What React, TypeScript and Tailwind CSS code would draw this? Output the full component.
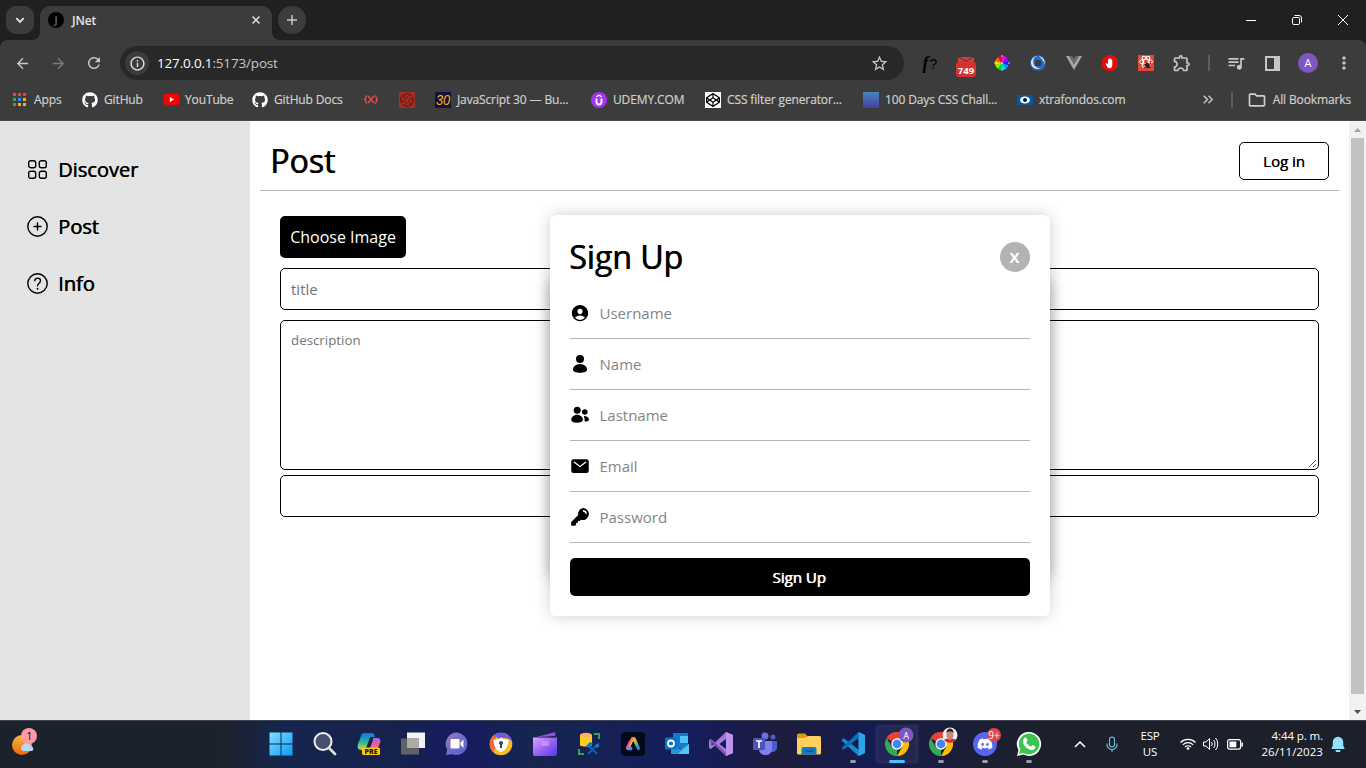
import type { ReactNode } from "react";
import { FaGithub, FaYoutube, FaCodepen, FaDiscord } from "react-icons/fa";
import {
  MdArrowBack,
  MdArrowForward,
  MdRefresh,
  MdStarOutline,
  MdOutlineInfo,
  MdQueueMusic,
  MdMoreVert,
  MdOutlineExtension,
  MdOutlineFolder,
} from "react-icons/md";
import { IoMail, IoPersonCircle } from "react-icons/io5";

function TabStrip() {
  return (
    <div className="flex h-10 shrink-0 items-start bg-[#1f2121]">
      <div className="mt-1.5 ml-1.5 flex size-7 items-center justify-center rounded-[10px] bg-[#3c3c3c]">
        <svg width="10" height="7" viewBox="0 0 10 7" fill="none" stroke="#e3e3e3" strokeWidth="1.8">
          <path d="M1.3 1.2 5 4.9 8.7 1.2" />
        </svg>
      </div>
      <div className="relative mt-1.5 ml-1.5 flex h-[34px] w-[232px] items-start rounded-t-[10px] bg-[#3c3c3c]">
        <svg className="absolute bottom-0 -left-2" width="8" height="8"><path d="M8 0v8H0a8 8 0 0 0 8-8" fill="#3c3c3c" /></svg>
        <svg className="absolute -right-2 bottom-0" width="8" height="8"><path d="M0 0v8h8a8 8 0 0 1-8-8" fill="#3c3c3c" /></svg>
        <div className="mt-1.5 ml-2 flex size-4 items-center justify-center rounded-full bg-black text-[11px] font-bold text-[#555]">J</div>
        <div className="mt-[7px] ml-2 grow text-[12px] leading-4 font-semibold tracking-[-0.1px] text-[#e8e8e8]">JNet</div>
        <svg className="mt-2.5 mr-3" width="8" height="8" viewBox="0 0 8 8" stroke="#e3e3e3" strokeWidth="1.5"><path d="m.5.5 7 7m0-7-7 7" /></svg>
      </div>
      <div className="mt-1.5 ml-1.5 flex size-7 items-center justify-center rounded-full bg-[#3c3c3c]">
        <svg width="10" height="10" viewBox="0 0 10 10" stroke="#c7c7c7" strokeWidth="1.5"><path d="M5 0v10M0 5h10" /></svg>
      </div>
      <div className="grow" />
      <div className="flex h-10 items-center text-white">
        <div className="flex w-[46px] justify-center"><svg width="10" height="10" stroke="currentColor"><path d="M0 5.5h10" /></svg></div>
        <div className="flex w-[46px] justify-center">
          <svg width="10" height="10" viewBox="0 0 10 10" fill="none" stroke="currentColor"><rect x=".5" y="2.5" width="7" height="7" rx="1.3" /><path d="M2.5.5H7A2.5 2.5 0 0 1 9.5 3v4.5" /></svg>
        </div>
        <div className="flex w-[46px] justify-center"><svg width="10" height="10" viewBox="0 0 10 10" stroke="currentColor"><path d="m0 0 10 10M10 0 0 10" /></svg></div>
      </div>
    </div>
  );
}

function Cell({ children }: { children: ReactNode }) {
  return <div className="flex w-9 shrink-0 items-center justify-center">{children}</div>;
}

const wheelColors = ["#f0f", "#a0f", "#22f", "#09f", "#0dd", "#0d4", "#7f0", "#fd0", "#f60", "#f03"];

function Toolbar() {
  return (
    <div className="flex h-[46px] shrink-0 items-center rounded-t-lg bg-[#3c3c3c] px-1 text-[#c7c7c7]">
      <Cell><MdArrowBack size={17} /></Cell>
      <Cell><MdArrowForward size={17} className="text-[#7b7b7b]" /></Cell>
      <Cell><MdRefresh size={18} /></Cell>
      <div className="ml-2 flex h-[34px] w-[784px] items-center rounded-full bg-[#282828]">
        <div className="ml-[5px] flex size-6 items-center justify-center rounded-full bg-[#3c3c3c]"><MdOutlineInfo size={17} className="text-[#e3e3e3]" /></div>
        <div className="ml-2 grow text-[13.500px] leading-5 tracking-[-0.17px] text-[#c7c7c7]"><span className="text-white">127.0.0.1</span>:5173/post</div>
        <MdStarOutline size={19} className="mr-[15px]" />
      </div>
      <div className="w-2" />
      <Cell>
        <span className="flex items-baseline gap-px leading-5 text-black">
          <span className="font-['Liberation_Serif',serif] text-[18px] font-bold italic">f</span>
          <span className="font-['Liberation_Sans',sans-serif] text-[14px]">?</span>
        </span>
      </Cell>
      <Cell>
        <svg className="mt-[7px]" width="20" height="21" viewBox="0 0 20 21"><path d="M2 1h16v5H2z" fill="#d93b30" /><path d="m2 .5 8 5 8-5" fill="none" stroke="#3c3c3c" /><rect y="6" width="20" height="15" rx="3" fill="#d7312f" /><text x="10" y="17.500" fill="#fff" fontSize="9.500" fontWeight="700" textAnchor="middle">749</text></svg>
      </Cell>
      <Cell>
        <svg width="16" height="16" viewBox="0 0 16 16">{wheelColors.map((c, i) => <path key={c} d="M8 8V1a7 7 0 0 1 4.110 1.340z" fill={c} transform={`rotate(${i * 36} 8 8)`} />)}<path d="M8 0v2M8 14v2M0 8h2M14 8h2" stroke="#ccc" /><circle cx="8" cy="8" r="1" fill="#ddd" /></svg>
      </Cell>
      <Cell>
        <svg width="16" height="16" viewBox="0 0 16 16"><circle cx="8" cy="8" r="7.8" fill="#286bbd" /><path d="M1 8.500a7 7 0 0 1 7-7.700A6 6 0 0 0 3.200 7c0 4 3.500 6 7 6.200-4 2-8.500-.500-9.200-4.700M9 1.200c4 .6 6.300 4 5.700 8-1-3-2.500-5.400-5.700-8" fill="#d6e6fa" /><circle cx="8" cy="8" r="3.300" fill="#3c3c3c" /></svg>
      </Cell>
      <Cell><svg width="16" height="14" viewBox="0 0 16 14"><path d="M0 0h3.2L8 8.2 12.8 0H16L8 14z" fill="#a8a8a8" /><path d="M3.2 0h3L8 3l1.8-3h3L8 8.2z" fill="#6b6b6b" /></svg></Cell>
      <Cell>
        <svg width="16" height="16" viewBox="0 0 16 16"><path d="M4.700 0h6.600L16 4.700v6.600L11.300 16H4.700L0 11.300V4.700z" fill="#e40d0d" /><path d="M4.600 8.300 6 9V4.600c0-.8 1-.8 1 0v-1c0-.8 1.1-.8 1.1 0v.5c0-.8 1.1-.8 1.1 0v1c0-.8 1.1-.8 1.1 0V10c0 2-1 3.200-2.700 3.200-1.500 0-2-.7-2.600-1.700L3.800 9c-.2-.6.3-1 .8-.7" fill="#fff" /></svg>
      </Cell>
      <Cell>
        <svg width="16" height="16" viewBox="0 0 16 16"><path d="M0 0h16v16H0z" fill="#df4a35" /><g fill="none" stroke="#fff"><ellipse cx="8" cy="6.700" rx="6.500" ry="2.500" /><ellipse cx="8" cy="6.700" rx="6" ry="2.500" transform="rotate(60 8 6.700)" /><ellipse cx="8" cy="6.700" rx="6" ry="2.500" transform="rotate(120 8 6.700)" /></g><ellipse cx="9.500" cy="10.500" rx="2.200" ry="2.800" fill="#32201e" transform="rotate(-25 9.500 10.500)" /><path d="m6 9 7 4m-7 0 7-5" stroke="#32201e" /></svg>
      </Cell>
      <Cell><MdOutlineExtension size={20} /></Cell>
      <div className="flex w-[18px] justify-center"><span className="h-4 w-0.5 bg-[#5e5e5e]" /></div>
      <Cell><MdQueueMusic size={20} /></Cell>
      <Cell><svg width="15" height="15" viewBox="0 0 15 15"><path d="M1 1h13v13H1z" fill="none" stroke="currentColor" strokeWidth="2" /><path d="M9 1h5v13H9z" fill="currentColor" /></svg></Cell>
      <Cell><span className="flex size-5 items-center justify-center rounded-full bg-[#7e57c2] text-[11px] text-white">A</span></Cell>
      <Cell><MdMoreVert size={20} /></Cell>
    </div>
  );
}

const appColors = ["#f44336", "#f44336", "#f44336", "#34a853", "#2196f3", "#fbae17", "#34a853", "#fbae17", "#fbae17"];

function Bookmark({ icon, label, width }: { icon: ReactNode; label?: string; width: string }) {
  return (
    <div className={`flex shrink-0 items-center gap-1.5 ${width}`}>
      <span className="flex size-4 shrink-0 items-center justify-center">{icon}</span>
      {label && <span className="whitespace-nowrap">{label}</span>}
    </div>
  );
}

function Bookmarks() {
  return (
    <div className="flex h-[35px] shrink-0 items-center border-b border-[#4a4848] bg-[#3c3c3c] pb-[7px] pl-3 text-[12px] leading-4 tracking-[-0.13px] text-[#cfcfcf] [-webkit-text-stroke:0.2px_currentColor]">
      <Bookmark width="w-[70px]" label="Apps" icon={
        <svg className="mr-0.5" width="13" height="13">{appColors.map((c, i) => <rect key={i} x={(i % 3) * 5} y={Math.floor(i / 3) * 5} width="3" height="3" fill={c} />)}</svg>
      } />
      <Bookmark width="w-[81px]" label="GitHub" icon={<FaGithub size={16} className="text-white" />} />
      <Bookmark width="w-[89px]" label="YouTube" icon={<FaYoutube size={17} className="shrink-0 rounded bg-[linear-gradient(#fff,#fff)] bg-[length:6px_6px] bg-center bg-no-repeat text-[#f00]" />} />
      <Bookmark width="w-[111px]" label="GitHub Docs" icon={<FaGithub size={16} className="text-white" />} />
      <Bookmark width="w-9" icon={<svg width="14" height="9" viewBox="0 0 14 9" fill="none" stroke="#ee4d50" strokeWidth="1.3"><path d="M3 .7C1 1 2.500 4 .7 4.500 2.500 5 1 8 3 8.300M11 .7c2 .3.500 3.300 2.300 3.800C11.500 5 13 8 11 8.300M4 1l6 7M10 1 4 8" /></svg>} />
      <Bookmark width="w-9" icon={
        <svg width="16" height="16" viewBox="0 0 16 16"><path d="M0 0h16v16H0z" fill="#aa2c24" /><g fill="none" stroke="#571f1b" strokeWidth="1">{[0, 60, 120, 180, 240, 300].map((a) => <path key={a} d="M8 6.500C8 3 11 1.500 13.500 4.500c1 1.500 1 3 .5 4" transform={`rotate(${a} 8 8)`} />)}</g></svg>
      } />
      <Bookmark width="w-[156px]" label="JavaScript 30 — Bu..." icon={
        <svg width="16" height="16"><path d="M0 0h16v16H0z" fill="#14123c" /><text x="8" y="13" fill="#f3b70f" fontSize="14" fontStyle="italic" fontFamily="Liberation Sans" textAnchor="middle" textLength="14" lengthAdjust="spacingAndGlyphs">30</text></svg>
      } />
      <Bookmark width="w-[114px]" label="UDEMY.COM" icon={
        <svg width="16" height="16" fill="none" stroke="#fff"><circle cx="8" cy="8" r="8" fill="#a435f0" stroke="none" /><path d="M5.500 6.500V10a2.500 2.500 0 0 0 5 0V6.500" strokeWidth="1.900" /><path d="M5.300 4.800 8 3.200l2.700 1.600" strokeWidth="1.300" /></svg>
      } />
      <Bookmark width="w-[158px]" label="CSS filter generator..." icon={<span className="flex size-4 items-center justify-center bg-white text-black"><FaCodepen size={14} /></span>} />
      <Bookmark width="w-[154px]" label="100 Days CSS Chall..." icon={<span className="size-4 bg-linear-to-b from-[#4584ba] to-[#473c9f]" />} />
      <Bookmark width="w-[114px]" label="xtrafondos.com" icon={
        <svg width="16" height="16"><path d="M0 3h16v10H0z" fill="#08569b" /><ellipse cx="8" cy="8" rx="5" ry="3.500" fill="#fff" /><circle cx="8" cy="8" r="2" fill="#111" /></svg>
      } />
      <div className="grow" />
      <svg className="mr-[18px]" width="10" height="9" fill="none" stroke="#c7c7c7" strokeWidth="1.500"><path d="m.7.7 3.800 3.800L.7 8.300M5.500.7l3.800 3.800-3.800 3.800" /></svg>
      <span className="mr-4 h-4 w-0.5 bg-[#5e5e5e]" />
      <MdOutlineFolder size={20} className="mr-1.5 -ml-0.5" />
      <span className="mr-[15px] whitespace-nowrap">All Bookmarks</span>
    </div>
  );
}

const iconProps = { width: 20, height: 20, viewBox: "0 0 20 20", fill: "currentColor" };

function PersonIcon() {
  return <svg {...iconProps}><circle cx="10" cy="4.900" r="4" /><path d="M10 10c4.200 0 7 2.900 7 5.500 0 2.200-2.800 3.200-7 3.200s-7-1-7-3.200C3 12.900 5.800 10 10 10" /></svg>;
}

function PeopleIcon() {
  return (
    <svg {...iconProps}>
      <circle cx="7.200" cy="5.300" r="3.500" />
      <circle cx="14.800" cy="7" r="2.800" />
      <path d="M7.200 9.800c3.200 0 5.700 2.500 5.700 5 0 2-2.500 2.900-5.900 2.900-3.500 0-5.800-.900-5.800-2.900 0-2.500 2.600-5 6-5M13.800 11c3 0 5.200 1.700 5.200 3.600 0 1.500-1.700 2.100-4.400 2 .3-2.200-.3-4.100-.8-5.600" />
    </svg>
  );
}

function KeyIcon() {
  return <svg {...iconProps}><path fillRule="evenodd" d="M13 1a6 6 0 1 1-2 11.700L9.500 14H8v1.800H6.200v1.800L5 18.800H1.200V15l7-7A6 6 0 0 1 13 1m-.2 2.600c-.3.700.2 1.200.900 1.300 1.100.2 1.600.8 1.800 1.700.2.700 1 .8 1.200.1.400-2-1.800-4.200-3.900-3.100" /></svg>;
}

function SignUp() {
  const fields = [
    { label: "Username", icon: <IoPersonCircle size={20} /> },
    { label: "Name", icon: <PersonIcon /> },
    { label: "Lastname", icon: <PeopleIcon /> },
    { label: "Email", icon: <IoMail size={20} /> },
    { label: "Password", icon: <KeyIcon /> },
  ];
  return (
    <div className="absolute top-[94px] left-[550px] flex h-[401px] w-[500px] flex-col rounded-md bg-white px-5 pb-5 shadow-[0_0_15px_rgba(0,0,0,0.2)]">
      <div className="flex items-center justify-between pt-5">
        <h2 className="-ml-px text-[32px] leading-[44px] [text-shadow:0.7px_0_currentColor]">Sign Up</h2>
        <button className="flex size-[30px] items-center justify-center rounded-full bg-[#b3b3b3] pr-px text-[15px] leading-5 font-bold text-white">X</button>
      </div>
      <div className="mt-[9px] flex flex-col">
        {fields.map((f) => (
          <label key={f.label} className="flex h-[51px] items-center gap-[9.500px] border-b border-[#b3b3b3]">
            {f.icon}
            <span className="text-[15px] text-[#858585]">{f.label}</span>
          </label>
        ))}
      </div>
      <button className="mt-auto h-[38px] rounded-[5px] bg-black pr-0.5 text-[15px] text-white [text-shadow:0.8px_0_currentColor]">Sign Up</button>
    </div>
  );
}

const navIconProps = { width: 21, height: 21, viewBox: "0 0 21 21", fill: "none", stroke: "currentColor", strokeWidth: 1.4, strokeLinecap: "round" as const };

function Page() {
  const nav = [
    {
      label: "Discover",
      icon: <svg {...navIconProps}><rect x="1.700" y="1.700" width="7" height="7" rx="2" /><rect x="12.300" y="1.700" width="7" height="7" rx="2" /><rect x="1.700" y="12.300" width="7" height="7" rx="2" /><rect x="12.300" y="12.300" width="7" height="7" rx="2" /></svg>,
    },
    {
      label: "Post",
      icon: <svg {...navIconProps}><circle cx="10.500" cy="10.500" r="9.700" /><path d="M10.500 7v7M7 10.500h7" /></svg>,
    },
    {
      label: "Info",
      icon: <svg {...navIconProps}><circle cx="10.500" cy="10.500" r="9.700" /><path d="M7.800 7.800c0-3.600 5.700-3.500 5.700 0 0 2.400-2.900 2.400-2.900 4.900" /><path d="M10.600 15.700v.1" strokeWidth="1.800" /></svg>,
    },
  ];
  return (
    <div className="relative flex h-[599px] shrink-0 bg-white text-black">
      <nav className="flex w-[250px] flex-col bg-[#e4e4e4] pt-5 pl-[25px]">
        {nav.map((n) => (
          <div key={n.label} className="flex h-[57px] items-center gap-2">
            <span className="flex w-[25px] justify-center">{n.icon}</span>
            <span className="text-[20px] [text-shadow:0.6px_0_currentColor]">{n.label}</span>
          </div>
        ))}
      </nav>
      <main className="flex grow flex-col px-2.5">
        <header className="flex h-[70px] items-center justify-between border-b border-[#b3b3b3] pt-3 pr-2.5 pb-px pl-2.5">
          <h1 className="text-[32px] leading-[44px] [text-shadow:0.7px_0_currentColor]">Post</h1>
          <button className="h-[38px] w-[90px] rounded-[5px] border border-black text-[15px] [text-shadow:0.3px_0_currentColor]">Log in</button>
        </header>
        <form className="flex flex-col items-start px-5 pt-[25px]">
          <div className="flex h-[42px] w-[126px] items-center justify-center rounded-[5px] bg-black text-[16px] text-white">Choose Image</div>
          <div className="mt-2.5 flex h-[42px] w-full items-center rounded-[5px] border border-black px-2.5 text-[15px] text-[#757575]">title</div>
          <div className="mt-2.5 flex h-[150px] w-full items-end justify-between rounded-[5px] border border-black">
            <span className="self-start pt-2.5 pl-2.5 text-[13.33px] leading-[19px] text-[#757575]">description</span>
            <svg width="11" height="11" stroke="#555"><path d="m2 9 7-7M6 9l3-3" /></svg>
          </div>
          <div className="mt-[5px] h-[42px] w-full rounded-[5px] border border-black" />
        </form>
      </main>
      <div className="flex w-[17px] flex-col items-center justify-between bg-[#f1f1f1]">
        <svg width="17" height="17"><path d="M5 11h7L8.500 7z" fill="#a3a3a3" /></svg>
        <div className="h-[556px] w-[13px] bg-[#c1c1c1]" />
        <div className="grow" />
        <svg width="17" height="17"><path d="M5 7h7l-3.500 4z" fill="#505050" /></svg>
      </div>
      <div className="absolute top-[158px] left-[550px] h-[299px] w-[500px] rounded-md bg-white shadow-[0_0_15px_rgba(0,0,0,0.3)]" />
      <SignUp />
    </div>
  );
}

function Chrome() {
  return (
    <>
      <path d="M12 12 1.600 6A12 12 0 0 1 22.400 6z" fill="#ea4335" />
      <path d="M12 12v12A12 12 0 0 1 1.600 6l5.200 9z" fill="#34a853" />
      <path d="M12 6h10.400A12 12 0 0 1 12 24l5.200-9z" fill="#fbbc05" />
      <path d="M12 6h10.400A12 12 0 0 0 1.600 6l5.200 3z" fill="#ea4335" />
      <circle cx="12" cy="12" r="5.700" fill="#fff" />
      <circle cx="12" cy="12" r="4.400" fill="#4285f4" />
    </>
  );
}

function Svg({ children }: { children: ReactNode }) {
  return <svg width="24" height="24" viewBox="0 0 24 24" className="overflow-visible">{children}</svg>;
}

function TaskIcon({ children, mark }: { children: ReactNode; mark?: "open" | "active" }) {
  return (
    <div className={`relative flex h-10 w-11 shrink-0 items-center justify-center ${mark === "active" ? "rounded bg-white/5 outline outline-white/5 -outline-offset-3" : ""}`}>
      {children}
      {mark && <span className={`absolute bottom-px h-[3px] rounded-full ${mark === "active" ? "w-4 bg-[#4cc2ff]" : "w-1.5 bg-[#9a9da3]"}`} />}
    </div>
  );
}

function Taskbar() {
  return (
    <div className="flex h-12 shrink-0 items-center border-t border-[#3d4250] bg-[linear-gradient(90deg,#1c222b_0,#1c222b_220px,#15254c_280px,#15224f_400px,#151b60_460px,#16254f_535px,#141d5c_690px,#1d1c3d_780px,#141b50_870px,#1c1f33_980px,#1b202b_1050px)] pb-px text-white">
      <div className="flex w-[259px] pl-[11px]">
        <svg className="-mt-1" width="28" height="28" viewBox="0 0 28 28">
          <defs><linearGradient id="sun" x2="0" y2="1"><stop stopColor="#f8b63b" /><stop offset="1" stopColor="#ee6a10" /></linearGradient></defs>
          <circle cx="11" cy="17" r="10" fill="url(#sun)" />
          <path d="M12 23a3.500 3.500 0 0 1-.5-6 5 5 0 0 1 8.500 1 2.700 2.700 0 0 1 1 5z" fill="#b9d5f8" />
          <circle cx="18" cy="8" r="8" fill="#ff99a4" /><text x="18.500" y="12" fontSize="11" textAnchor="middle" fill="#111">1</text>
        </svg>
      </div>
      <TaskIcon><Svg><defs><linearGradient id="win" x2="1" y2="1"><stop stopColor="#7fe0ff" /><stop offset="1" stopColor="#0b9bf5" /></linearGradient></defs><path d="M.5.5h11v11H.5zm12 0h11v11h-11zm-12 12h11v11H.5zm12 0h11v11h-11z" fill="url(#win)" /></Svg></TaskIcon>
      <TaskIcon><Svg><circle cx="10" cy="9.500" r="8.500" fill="#44516d" stroke="#f0f0f0" strokeWidth="2" /><path d="m16 16 6 6" stroke="#dedede" strokeWidth="2.800" strokeLinecap="round" /></Svg></TaskIcon>
      <TaskIcon><Svg>
        <defs><linearGradient id="cpa" x2="0" y2="1"><stop stopColor="#1a74d9" /><stop offset=".5" stopColor="#23b2a5" /><stop offset="1" stopColor="#cbd83c" /></linearGradient><linearGradient id="cpb" x2="0" y2="1"><stop stopColor="#b45be8" /><stop offset="1" stopColor="#f36c6c" /></linearGradient></defs>
        <path d="M7 1h8c2 0 2 2 3 4h-5l-3.500 10c-1 2-2 3-5 3C1 18 0 15 1 12L4 4c.700-2 1.500-3 3-3" fill="url(#cpa)" />
        <path d="M16 6h4c3 0 4 2 3 5l-2 5h-8l3-8z" fill="url(#cpb)" />
        <rect x="5" y="15.500" width="18" height="7.500" rx="1.500" fill="#fdc50b" /><text x="14" y="22" fontSize="7" fontWeight="800" textAnchor="middle" fill="#1b1b1b">PRE</text>
      </Svg></TaskIcon>
      <TaskIcon><Svg><path d="M6 .5h18V16H6z" fill="#f2f2f2" /><path d="M0 6.500h18v16H0z" fill="#626262" /><path d="M6 6.500h12V16H6z" fill="#aaa" /></Svg></TaskIcon>
      <TaskIcon><Svg><defs><linearGradient id="chat" x2="1" y2="1"><stop stopColor="#9479b0" /><stop offset="1" stopColor="#5060dc" /></linearGradient></defs><path d="M12 .5A11.300 11.300 0 1 1 7 22.300L1 23l1.200-5.500A11.300 11.300 0 0 1 12 .5" fill="url(#chat)" /><rect x="5.500" y="7" width="9" height="9.500" rx="1" fill="#fff" /><path d="m15.500 10.500 3-3v8.500l-3-3z" fill="#fff" /></Svg></TaskIcon>
      <TaskIcon><Svg>
        <circle cx="12" cy="12" r="11.300" fill="#f8bd27" /><path d="M4 20A11.300 11.300 0 0 1 8 1.500c2-1-4 6 0 12z" fill="#f4683d" /><path d="M5 3a11.300 11.300 0 0 1 18 7c-3-4-8-5-13-3z" fill="#7057e8" /><path d="M4.500 7.500C8 8 10 7 12 5.500 14 7 16 8 19.500 7.500c0 7-3 11-7.500 12.500-4.500-1.500-7.500-5.500-7.500-12.500" fill="#fff" /><circle cx="12" cy="11" r="2" fill="#39465b" /><path d="M11 11h2v5h-2z" fill="#39465b" />
      </Svg></TaskIcon>
      <TaskIcon><Svg><defs><linearGradient id="clip" x2="1" y2="1"><stop stopColor="#e0a2ff" /><stop offset=".5" stopColor="#9c63f4" /><stop offset="1" stopColor="#5237ed" /></linearGradient></defs><path d="M0 6 21 .3a1 1 0 0 1 1.300 1V4L1 9z" fill="#8b55c9" /><path d="M0 5.500h24V22a2 2 0 0 1-2 2H2a2 2 0 0 1-2-2z" fill="url(#clip)" /><path d="M0 5.500 22 4v1.500z" fill="#16245a" /><path d="M8 9h8v5H8z" fill="#d69dff" opacity=".6" /></Svg></TaskIcon>
      <TaskIcon><Svg>
        <path d="M3 3v10c0 2 12 2 12 0V3z" fill="#ffcb25" /><ellipse cx="9" cy="3" rx="6" ry="2.200" fill="#ffad72" /><path d="M17 2h5v5M2 17v5h5" fill="none" stroke="#37a04b" strokeWidth="2" /><path d="m11 13 9 9M20 13l-9 9" stroke="#0e5fb0" strokeWidth="2" /><path d="m9 14 4-4 3 1-4 5zM18 13l4-2v4l-3 1z" fill="#1675c5" />
      </Svg></TaskIcon>
      <TaskIcon><Svg><defs><linearGradient id="adb" x2="1" y2="1"><stop stopColor="#ff433d" /><stop offset=".4" stopColor="#ffb32f" /><stop offset=".65" stopColor="#45d44f" /><stop offset="1" stopColor="#5a62f7" /></linearGradient></defs><rect width="24" height="24" rx="4" fill="#020a19" /><path d="M7 16.500 11.500 6.500h1.500l4.500 10" fill="none" stroke="url(#adb)" strokeWidth="3.200" strokeLinecap="round" strokeLinejoin="round" /><circle cx="9.500" cy="16.500" r="2" fill="#4e83ff" /><path d="m5.500 17 3.500-8" stroke="#ee4cc5" strokeWidth="2" /></Svg></TaskIcon>
      <TaskIcon><Svg><path d="M8 1h14a1 1 0 0 1 1 1v14H8z" fill="#1678ca" /><path d="M15 4h8v7h-8z" fill="#4bc6fa" /><path d="m6 12 9 5 9-5v10H6z" fill="#2295db" /><path d="m24 12-11 10h11z" fill="#54c5ef" /><rect y="5.500" width="12" height="12" rx="1" fill="#0976c7" /><circle cx="6" cy="11.500" r="3" fill="none" stroke="#fff" strokeWidth="1.800" /></Svg></TaskIcon>
      <TaskIcon><Svg><path d="m17 0 7 3v18l-7 3L6 13.500 2 17l-2-1V8l2-1 4 3.500zm0 7-6.500 5 6.500 5zM2.500 10v4l2-2z" fill="#a278da" fillRule="evenodd" /><path d="m0 8 2-1 16 15-1 2z" fill="#7850ae" /><path d="m17 0 7 3v18l-7 3z" fill="#c092ef" /></Svg></TaskIcon>
      <TaskIcon><Svg><circle cx="12" cy="4" r="3.500" fill="#6b71d7" /><circle cx="20" cy="5" r="2.500" fill="#5059c9" /><path d="M15 9h9v6c0 6-6 6-9 3z" fill="#5059c9" /><path d="M6 9h13v8c0 8-13 8-13 0z" fill="#7b83eb" /><rect y="6" width="12" height="12" rx="1" fill="#4b53bc" /><path d="M3 9h6M6 9v7" stroke="#fff" strokeWidth="1.700" /></Svg></TaskIcon>
      <TaskIcon><Svg><path d="M0 3a1.500 1.500 0 0 1 1.500-1.500H8l3 3-3 3H0z" fill="#dd9910" /><path d="M0 6h8l3-2h11.500A1.500 1.500 0 0 1 24 5.500V21a1.500 1.500 0 0 1-1.500 1.500h-21A1.500 1.500 0 0 1 0 21z" fill="#ffd15c" /><path d="M4.500 22.500V17a2 2 0 0 1 2-2h11a2 2 0 0 1 2 2v5.500z" fill="#127bc5" /><path d="M8 18.500h8v1.500H8z" fill="#0b5796" /></Svg></TaskIcon>
      <TaskIcon mark="open"><Svg><path d="M17.500 0 24 3v18l-6.500 3-17-15.500L2.500 6 18 18z" fill="#178ace" /><path d="M17.500 0v6L2.500 18 .500 16z" fill="#0b70b5" /><path d="m17.500 0 6.500 3v18l-6.500 3z" fill="#2da4ea" /></Svg></TaskIcon>
      <TaskIcon mark="active"><Svg><Chrome /><circle cx="21" cy="3" r="7.500" fill="#7e57c2" /><text x="21" y="6.500" fontSize="9" textAnchor="middle" fill="#fff">A</text></Svg></TaskIcon>
      <TaskIcon mark="open"><Svg><Chrome /><circle cx="21" cy="3" r="7.500" fill="#eef0ef" /><path d="M15 8c2-2 10-2 12 0-3 3.500-9 3.500-12 0" fill="#cf263b" /><ellipse cx="21" cy="3" rx="3.500" ry="5" fill="#c98d75" /><path d="M17.300 1c0-6 7.400-6 7.400 0-2-2-5.400-2-7.400 0" fill="#352724" /></Svg></TaskIcon>
      <TaskIcon mark="open"><Svg><circle cx="12" cy="12" r="12" fill="#5865f2" /><FaDiscord x={4} y={4} size={16} color="#fff" /><circle cx="21" cy="3" r="7" fill="#df474c" /><text x="21" y="7" fontSize="10" textAnchor="middle" fill="#fff">9+</text></Svg></TaskIcon>
      <TaskIcon mark="open"><Svg><path d="M12 0a12 12 0 1 1-5.500 22.600L0 24l1.500-6A12 12 0 0 1 12 0" fill="#fff" /><path d="M12 1.600A10.400 10.400 0 1 1 6.800 21L2 22l1.200-4.700A10.400 10.400 0 0 1 12 1.600" fill="#3dc455" /><path d="M7.500 6c.7-.7 1.700-.5 2 .2l1 2.400-1.200 1.700c1 2 2.500 3.500 4.600 4.400l1.600-1.700 3 1.500c.4 3-3 4-5 3.300C9.500 16.500 6.500 13.500 6 10c-.2-1.700.5-3 1.500-4" fill="#fff" /></Svg></TaskIcon>
      <div className="grow" />
      <div className="flex w-8 justify-center"><svg width="12" height="7" fill="none" stroke="#fff" strokeWidth="1.500"><path d="m1 6 5-5 5 5" /></svg></div>
      <div className="flex w-8 justify-center"><svg width="12" height="17" fill="none" stroke="#6fc6dc" strokeWidth="1.100"><rect x="3.500" y="1" width="5" height="10" rx="2.500" /><path d="M1 7.500v1a5 5 0 0 0 10 0v-1M6 13.500V16" /></svg></div>
      <div className="flex w-11 flex-col text-center text-[11.500px] leading-4 tracking-[-0.200px]"><span>ESP</span><span>US</span></div>
      <div className="flex w-[76px] items-center justify-around pl-1">
        <svg width="16" height="12" viewBox="0 0 16 12" fill="none" stroke="#fff" strokeWidth="1.200"><path d="M.500 4.500a10.500 10.500 0 0 1 15 0M2.800 6.800a7.300 7.300 0 0 1 10.400 0M5 9a4.300 4.300 0 0 1 6 0" /><circle cx="8" cy="10.500" r="1.300" fill="#fff" stroke="none" /></svg>
        <svg width="16" height="14" viewBox="0 0 16 14" fill="none" stroke="#fff"><path d="M.5 5h2.700L6.500 1.500v11L3.200 9H.5zM8.500 5a3 3 0 0 1 0 4m2-6a6 6 0 0 1 0 8m2-10a9 9 0 0 1 0 12" /></svg>
        <svg width="17" height="11" viewBox="0 0 17 11"><rect x=".6" y=".6" width="13" height="9.500" rx="2" fill="none" stroke="#fff" strokeWidth="1.200" /><path d="M2.500 2.500h6.800v5.700H2.500zM14.500 3.500h1.500v4h-1.500z" fill="#fff" /></svg>
      </div>
      <div className="ml-1 flex w-[71px] flex-col text-right text-[11.500px] leading-4 tracking-[0.050px] whitespace-nowrap"><span className="tracking-[-0.100px]">4:44 p. m.</span><span>26/11/2023</span></div>
      <svg className="mr-[21px] ml-2" width="14" height="16" viewBox="0 0 14 16" fill="#91e2fb"><path d="M1.800 6a5.200 5.200 0 0 1 10.400 0v3.500l1.500 3.500H.3l1.500-3.500zM4.500 14h5a2.500 2.500 0 0 1-5 0" /></svg>
    </div>
  );
}

export default function App() {
  return (
    <div className="flex h-[768px] w-[1366px] flex-col overflow-hidden bg-[#1f2121] font-['Open_Sans','Noto_Sans',sans-serif]">
      <TabStrip />
      <Toolbar />
      <Bookmarks />
      <Page />
      <Taskbar />
    </div>
  );
}
